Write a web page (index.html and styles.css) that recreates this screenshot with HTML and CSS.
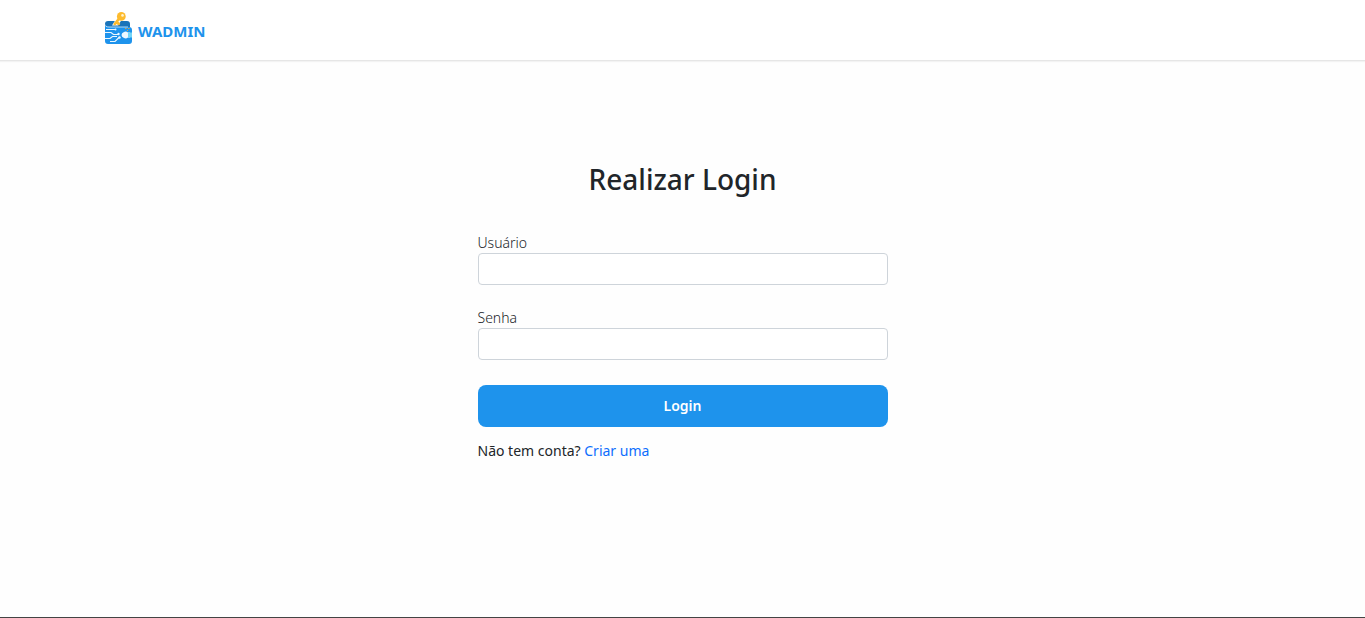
FILE: index.html
```html
<!DOCTYPE html>
<html lang="pt-BR">
<head>
<meta charset="utf-8">
<meta name="viewport" content="width=device-width, initial-scale=1">
<title>WADMIN</title>
<link rel="stylesheet" href="styles.css">
</head>
<body>
<header class="navbar">
  <div class="navbar-inner">
    <a class="brand" href="#">
      <svg class="brand-logo" viewBox="0 0 27 32" aria-hidden="true">
        <path fill="#1a73b9" d="M3 9h19q3 0 3 3v3H2Q0 14 0 12q0-3 3-3z"/>
        <path fill="#1e93ec" d="M0 13.500q1 1.500 3 1.500h21q3 0 3 3v11q0 3-3 3H3q-3 0-3-3z"/>
        <path fill="none" stroke="#d9efff" stroke-width=".8" d="M1 14.200q1 .8 3 .8h19"/>
        <path fill="#fff" d="M7 13.500 10.500 8h6L13 13.500z"/>
        <path fill="none" stroke="#fdbb2e" stroke-width="2.800" stroke-linecap="round" d="M15 5.500 9.800 12M12 10.500l1.800 1.300"/>
        <circle cx="16.300" cy="4.400" r="4.400" fill="#fdbb2e"/>
        <circle cx="17.500" cy="3.400" r="1.300" fill="#fff3d0"/>
        <g fill="none" stroke="#e9f6ff" stroke-width="1.200">
          <path d="M1 17.500h9M0 20.500h6l2.500 2H13M5 29.500h5l4-4M0 26.500h5l2.500-2H12"/>
        </g>
        <g fill="#e9f6ff"><circle cx="13.500" cy="22" r="1.200"/><circle cx="14.500" cy="25.500" r="1.200"/><circle cx="10.500" cy="17.500" r="1"/></g>
        <path fill="#eef8ff" d="M25 20.500h-2q-2-1.500-4-.5-2.500 1-2.500 3t2.500 3q2 1 4-.5h2z"/>
        <path fill="#72d4f7" d="M23 20.500h4v5h-4z"/>
        <path stroke="#d3a34c" stroke-width="1" d="M20 16.500h1.500M23 16.500h1.500M22 18.500h1"/>
      </svg>
      <span>WADMIN</span>
    </a>
  </div>
</header>
<main class="content">
  <form class="login">
    <h1 class="title">Realizar Login</h1>
    <div class="field">
      <label class="label" for="user">Usuário</label>
      <input class="input" id="user" type="text">
    </div>
    <div class="field">
      <label class="label" for="password">Senha</label>
      <input class="input" id="password" type="password">
    </div>
    <button class="submit" type="submit">Login</button>
    <p class="signup">Não tem conta? <a class="link" href="#">Criar uma</a></p>
  </form>
</main>
<footer class="footer"></footer>
</body>
</html>
```
FILE: styles.css
```css
* {
  box-sizing: border-box;
}

body {
  display: flex;
  flex-direction: column;
  min-height: 100vh;
  margin: 0;
  background: #fefefe;
  color: #212529;
  font-family: "Segoe UI", "Noto Sans", sans-serif;
  font-size: 14px;
  line-height: 20px;
}

.navbar {
  border-bottom: 1px solid #e6e6e6;
  background: #fff;
  box-shadow: 0 1px 1px #f3f3f3;
}

.navbar-inner {
  display: flex;
  align-items: center;
  max-width: 1155px;
  height: 60px;
  margin: 0 auto;
}

.brand {
  display: flex;
  align-items: center;
  gap: 6px;
  padding-bottom: 4px;
  color: #1e93ec;
  font-size: 15px;
  font-weight: 700;
  text-decoration: none;
}

.brand span {
  padding-top: 5px;
}

.brand-logo {
  width: 27px;
  height: 32px;
}

.content {
  flex: 1;
  padding: 100px 16px 32px;
}

.login {
  display: flex;
  flex-direction: column;
  max-width: 410px;
  margin: 0 auto;
}

.title {
  margin: 0 0 36px;
  font-size: 28px;
  font-weight: 500;
  line-height: 36px;
  text-align: center;
}

.field {
  display: flex;
  flex-direction: column;
  margin-bottom: 23px;
}

.label {
  font-weight: 300;
}

.input {
  width: 100%;
  height: 32px;
  padding: 4px 8px;
  border: 1px solid #ced4da;
  border-radius: 4px;
  background: #fff;
  font: inherit;
}

.submit {
  height: 42px;
  margin-top: 2px;
  border: 0;
  border-radius: 8px;
  background: #1e93ec;
  color: #fff;
  font: inherit;
  font-weight: 600;
}

.signup {
  margin: 14px 0 0;
}

.link {
  color: #0d6efd;
  text-decoration: none;
}

.footer {
  border-top: 1px solid #444;
}
```
